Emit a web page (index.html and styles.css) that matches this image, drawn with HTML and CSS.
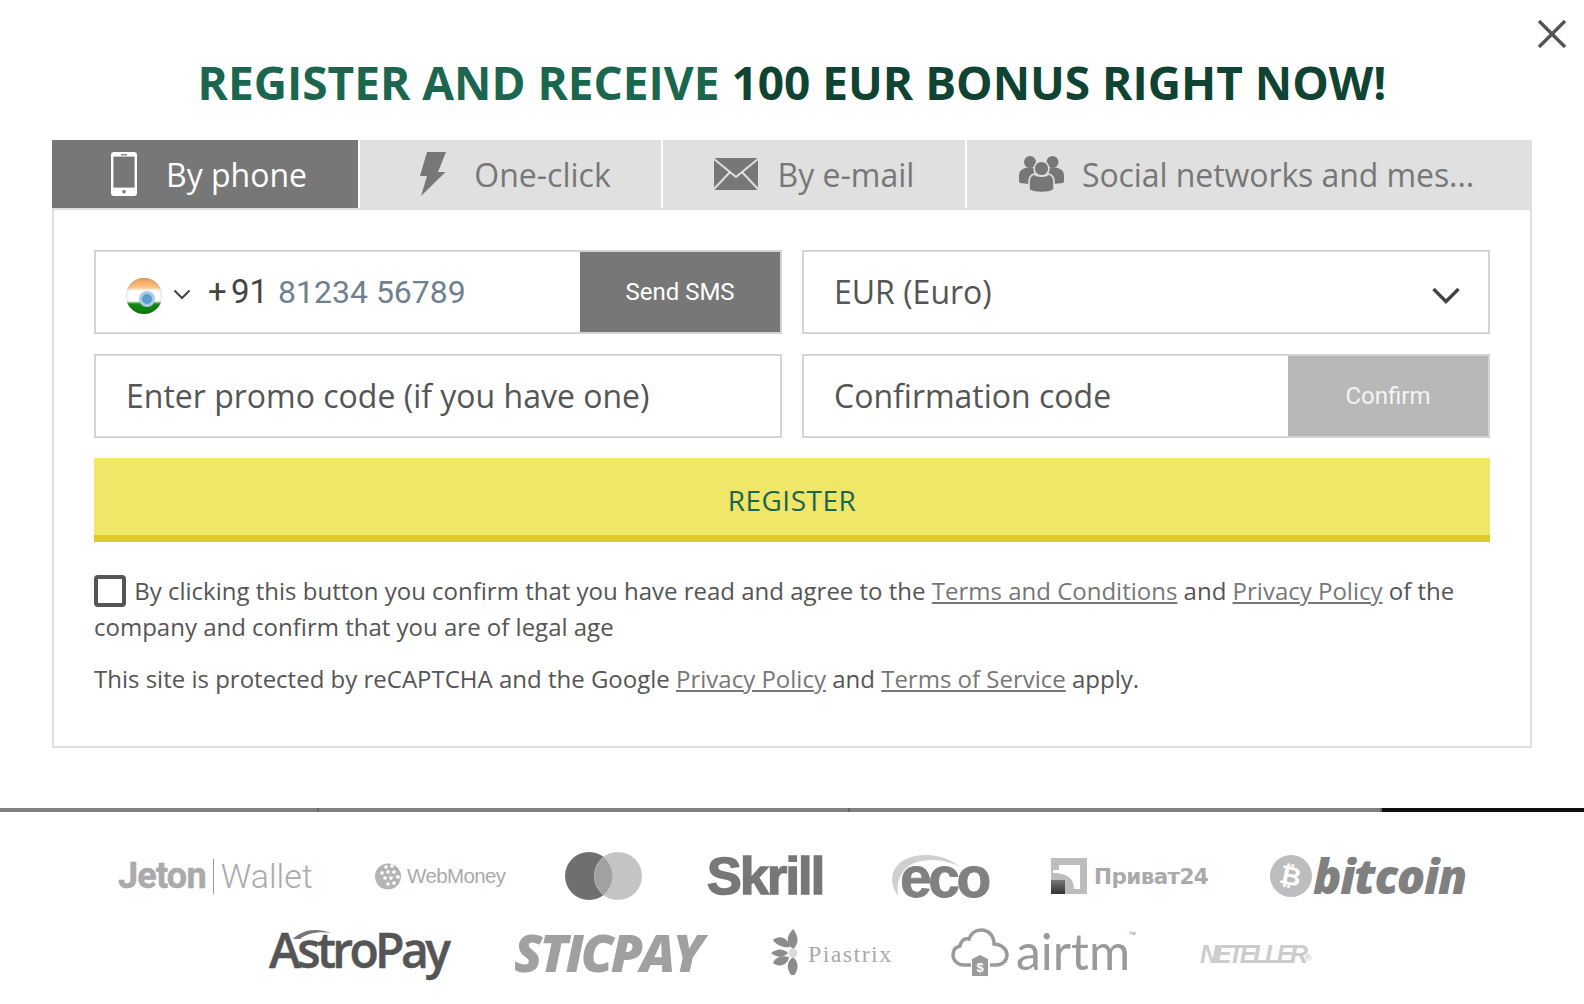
FILE: index.html
```html
<!DOCTYPE html>
<html lang="en">
<head>
<meta charset="utf-8">
<title>Register</title>
<link rel="stylesheet" href="styles.css">
</head>
<body>
<div class="modal">
  <svg class="close" viewBox="0 0 28 28" width="28" height="28"><path d="M1 1 L27 27 M27 1 L1 27" stroke="#555" stroke-width="3.4" fill="none"/></svg>
  <h1 class="title"><span class="t1">REGISTER AND RECEIVE</span> <span class="t2">100 EUR BONUS RIGHT NOW!</span></h1>
  <div class="tabs">
    <div class="tab tab-active t-a">
      <svg class="ico" width="26" height="44" viewBox="0 0 26 44"><rect width="26" height="44" rx="3" fill="#fff"/><rect x="2.4" y="4.6" width="21.2" height="31" fill="#777"/><rect x="10" y="2.2" width="6" height="1.2" fill="#777"/><circle cx="13" cy="39.8" r="1.8" fill="#777"/></svg>
      <span>By phone</span>
    </div>
    <div class="tab t-b">
      <svg class="ico" width="26" height="44" viewBox="0 0 26 44"><path d="M7 0H26L18 20H25.5L1 44L7 24H0Z" fill="#777"/></svg>
      <span>One-click</span>
    </div>
    <div class="tab t-c">
      <svg class="ico" width="44" height="32" viewBox="0 0 44 32"><rect width="44" height="32" rx="2" fill="#777"/><path d="M0 1L22 19L44 1M0 31L16 14M44 31L28 14" fill="none" stroke="#e0e0e0" stroke-width="2"/></svg>
      <span>By e-mail</span>
    </div>
    <div class="tab t-d">
      <svg class="ico" width="45" height="37" viewBox="0 0 45 37"><g fill="#777"><circle cx="11" cy="6" r="6"/><circle cx="33.5" cy="6" r="6"/><path d="M4 13C8 11 16 11 20 14V29L1 27C0 26 0 25 0 23V19C0 16 2 14 4 13Z"/><path d="M41 13C37 11 29 11 25 14V29L44 27C45 26 45 25 45 23V19C45 16 43 14 41 13Z"/></g><g fill="#777" stroke="#e0e0e0" stroke-width="1.6"><circle cx="22.5" cy="12.5" r="7.4"/><path d="M15 18C19 21 26 21 30 18C33 19 35 22 35 26V34C29 37.5 16 37.5 10 34V26C10 22 12 19 15 18Z"/></g></svg>
      <span>Social networks and mes...</span>
    </div>
  </div>
  <div class="panel">
    <div class="grid">
      <div class="field">
        <div class="phone">
          <span class="flag"></span>
          <svg class="mini-caret" width="18" height="11" viewBox="0 0 18 11"><path d="M1.5 1.5 L9 9 L16.5 1.5" fill="none" stroke="#444" stroke-width="2"/></svg>
          <span class="code">+ 91</span>
          <span class="num">81234 56789</span>
        </div>
        <div class="btn btn-dark">Send SMS</div>
      </div>
      <div class="field field-select">
        <span class="val">EUR (Euro)</span>
        <svg class="sel-caret" width="28" height="17" viewBox="0 0 28 17"><path d="M1.5 2 L14 14.5 L26.5 2" fill="none" stroke="#444" stroke-width="3.4"/></svg>
      </div>
      <div class="field"><span class="val">Enter promo code (if you have one)</span></div>
      <div class="field">
        <span class="val grow">Confirmation code</span>
        <div class="btn btn-light">Confirm</div>
      </div>
    </div>
    <div class="register">REGISTER</div>
    <p class="legal legal-first"><span class="check"></span> By clicking this button you confirm that you have read and agree to the <a>Terms and Conditions</a> and <a>Privacy Policy</a> of the company and confirm that you are of legal age</p>
    <p class="legal legal-second">This site is protected by reCAPTCHA and the Google <a>Privacy Policy</a> and <a>Terms of Service</a> apply.</p>
  </div>
</div>
<div class="slider">
  <i class="s1"></i><i class="s2"></i><i class="s3"></i><i class="s4"></i>
</div>
<div class="logos">
  <div class="row row-1">
    <div class="logo l-jeton"><b>Jeton</b><em></em><span>Wallet</span></div>
    <div class="logo l-wm">
      <svg width="26" height="27" viewBox="0 0 26 27"><circle cx="13" cy="13.5" r="13" fill="#b4b4b4"/><g fill="#fff"><path d="M10 2l3 1-1 3-3-1zM16 1l3 1-1 3-3-1zM6 8l3 1-1 3-3-1zM12 7l3 1-1 3-3-1zM18 7l3 1-1 3-3-1zM9 13l3 1-1 3-3-1zM15 13l3 1-1 3-3-1zM21 12l4 1-1 3-3-1zM12 19l3 1-1 3-3-1zM18 18l3 1-1 3-3-1z"/></g></svg>
      <span>WebMoney</span>
    </div>
    <div class="logo l-mc"><svg width="77" height="48" viewBox="0 0 77 48"><circle cx="24" cy="24" r="24" fill="#6f6f6f"/><circle cx="53" cy="24" r="24" fill="#c4c4c4"/><path d="M38.5 5.3a24 24 0 0 1 0 37.4a24 24 0 0 1 0-37.4Z" fill="#a2a2a2"/></svg></div>
    <div class="logo l-skrill">Skrill</div>
    <div class="logo l-eco">
      <svg class="eco-arc" width="76" height="44" viewBox="0 0 76 44"><path d="M8 42 C-6 22 6 1 36 1 C50 1 62 6 70 13 C58 6 36 3 22 10 C10 16 6 30 8 42Z" fill="#cfcfcf"/></svg>
      <span>eco</span>
    </div>
    <div class="logo l-privat">
      <svg width="36" height="36" viewBox="0 0 36 36"><defs><linearGradient id="pg" x1="0" y1="0" x2="0" y2="1"><stop offset="0" stop-color="#777"/><stop offset="1" stop-color="#333"/></linearGradient></defs><rect width="36" height="36" fill="#bdbdbd"/><path d="M8 7H29V31H23C23 22 18 15 2 15V12H8Z" fill="#fff"/><rect y="22" width="14" height="14" fill="url(#pg)"/></svg>
      <span>Приват24</span>
    </div>
    <div class="logo l-btc">
      <span class="btc-c"><span class="btc-s">₿</span></span>
      <span class="btc-t">bitcoin</span>
    </div>
  </div>
  <div class="row row-2">
    <div class="logo l-astro">
      <svg class="astro-arc" width="38" height="12" viewBox="0 0 38 12"><path d="M0 11C8 2 24-1 38 5C26 3 14 5 7 11Z" fill="#777"/></svg>
      <span>AstroPay</span>
    </div>
    <div class="logo l-stic">STICPAY</div>
    <div class="logo l-piastrix">
      <svg width="29" height="46" viewBox="0 0 29 46"><g fill="#8c8c8c"><path d="M22 20C15 15 15 7 22 0C28 7 28 15 22 20Z"/><path d="M22 46C15 41 15 33 22 26C28 33 28 41 22 46Z" transform="matrix(1 0 0 -1 0 74)"/><path d="M19 18C13 19 6 17 2 11C8 5 18 9 19 18Z"/><path d="M17 24C11 19 6 20 0 24C6 29 12 29 17 24Z"/><path d="M18 28C17 36 8 39 2 34C4 28 11 26 18 28Z"/></g><circle cx="22" cy="24" r="4.5" fill="#dcdcdc"/></svg>
      <span>Piastrix</span>
    </div>
    <div class="logo l-airtm">
      <svg width="58" height="48" viewBox="0 0 58 48"><path d="M20 37H13C6 37 2 32 2 27C2 22 5 19 9 18C10 12 14 10 18 11C20 5 25 2 30 2C38 2 43 8 43 16C50 16 56 21 56 27C56 33 51 37 45 37H39" fill="none" stroke="#9a9a9a" stroke-width="3.4"/><path d="M21 31L29 27L37 31V48H21Z" fill="#9a9a9a"/><text x="29" y="44" text-anchor="middle" class="airtm-d">$</text></svg>
      <span class="airtm-t">airtm</span><sup>™</sup>
    </div>
    <div class="logo l-net">NETELLER<small>®</small></div>
  </div>
</div>
</body>
</html>
```
FILE: styles.css
```css
* { box-sizing: border-box; }
html, body { margin: 0; padding: 0; }
body { width: 1584px; height: 1004px; overflow: hidden; background: #fff; font-family: "Open Sans", sans-serif; color: #555; }
.modal { position: relative; padding: 0 52px; height: 808px; }
.close { position: absolute; top: 20px; right: 18px; }
.title { margin: 0; height: 140px; padding-top: 52px; text-align: center; font-size: 46px; line-height: 60px; font-weight: 700; white-space: nowrap; }
.t1 { color: #1b664e; }
.t2 { color: #0f4332; }
.tabs { display: flex; height: 70px; background: #e0e0e0; padding-bottom: 2px; }
.tab { display: flex; align-items: center; justify-content: center; gap: 28px; height: 68px; font-size: 32px; color: #777; border-right: 2px solid #fff; }
.t-a { width: 308px; padding-left: 8px; gap: 29px; }
.t-b { width: 303px; padding-left: 10px; }
.t-c { width: 304px; gap: 20px; }
.t-d { flex: 1; border-right: 0; gap: 18px; padding-right: 6px; letter-spacing: -.08px; }
.tab-active { background: #777; color: #fff; }
.panel { height: 538px; border: 2px solid #e0e0e0; border-top: 0; padding: 40px 40px 0; }
.grid { display: grid; grid-template-columns: 1fr 1fr; gap: 20px 20px; }
.field { display: flex; align-items: center; height: 84px; border: 2px solid #d4d4d4; font-size: 32px; color: #555; padding-left: 30px; }
.field-select { justify-content: space-between; padding-right: 28px; }
.sel-caret { margin-top: 6px; }
.val { white-space: nowrap; margin-bottom: 1px; }
.grow { flex: 1; }
.phone { flex: 1; display: flex; align-items: center; }
.flag { width: 36px; height: 36px; margin-top: 7px; border-radius: 50%; background: linear-gradient(#f0a050 0, #f8c48a 26%, #fff 36%, #fff 64%, #148a14 72%, #0f7a0f 100%); position: relative; box-shadow: inset 0 0 3px rgba(0,0,0,.25); filter: blur(.4px); }
.flag::after { content: ""; position: absolute; left: 13px; top: 13px; width: 10px; height: 10px; border-radius: 50%; background: #5a9ccb; border: 3px solid #a9cde6; }
.mini-caret { margin: 4px 0 0 11px; }
.code { margin-left: 17px; margin-bottom: 1px; color: #444; font-family: Roboto, sans-serif; word-spacing: -4px; font-size: 33px; }
.num { margin-left: 10px; margin-bottom: 1px; color: #708090; font-family: Roboto, sans-serif; }
.btn { align-self: stretch; display: flex; align-items: center; justify-content: center; width: 200px; padding-bottom: 1px; font-family: Roboto, sans-serif; font-size: 24px; color: #fff; }
.btn-dark { background: #777; }
.btn-light { background: #b8b8b8; color: #f4f4f4; }
.register { margin-top: 20px; height: 84px; background: #f0e668; border-bottom: 7px solid #dccb2c; color: #1b664e; font-size: 28px; letter-spacing: .5px; text-align: center; line-height: 84px; }
.legal { margin: 0; font-size: 24px; line-height: 36px; color: #555; }
.legal a { color: #777; text-decoration: underline; }
.legal-first { margin-top: 31px; }
.legal-second { margin-top: 16px; }
.check { display: inline-block; width: 32px; height: 32px; margin-right: 2px; border: 4px solid #555; border-radius: 4px; vertical-align: -7px; }
.slider { display: flex; height: 4px; background: #808080; }
.slider i { display: block; height: 4px; background: #808080; border-right: 2px solid #666; }
.s1 { width: 319px; }
.s2 { width: 531px; }
.s3 { width: 532px; }
.s4 { flex: 1; background: #111 !important; border: 0 !important; }
.logos { display: flex; flex-direction: column; }
.row { display: flex; align-items: center; justify-content: center; }
.row-1 { height: 80px; margin-top: 24px; }
.row-2 { height: 60px; margin-top: 6px; padding-right: 5px; }
.logo { display: flex; align-items: center; flex: none; white-space: nowrap; position: relative; }
.logo svg { flex: none; }
.l-jeton { gap: 7px; width: 194px; color: #aaa; }
.l-jeton b { font-family: Roboto, sans-serif; font-weight: 700; font-size: 36px; letter-spacing: -.8px; -webkit-text-stroke: .5px #aaa; }
.l-jeton em { flex: none; width: 1px; height: 35px; background: #999; }
.l-jeton span { font-family: Roboto, sans-serif; font-weight: 300; font-size: 34px; }
.l-wm { gap: 6px; width: 130px; margin-left: 63px; color: #aaa; }
.l-wm span { font-family: "Liberation Sans", sans-serif; font-size: 20.5px; letter-spacing: -.6px; }
.l-mc { width: 77px; margin-left: 60px; }
.l-skrill { width: 113px; margin-left: 65px; font-family: "Liberation Sans", sans-serif; font-weight: 700; font-size: 52px; letter-spacing: -1.8px; color: #777; -webkit-text-stroke: 1.5px #777; }
.l-eco { width: 99px; height: 44px; margin-left: 70px; }
.eco-arc { position: absolute; left: 0; top: 0; }
.l-eco span { position: relative; margin-left: 10px; margin-top: 2px; font-family: "Liberation Sans", sans-serif; font-weight: 700; font-size: 57px; letter-spacing: -3.5px; color: #808080; line-height: 44px; -webkit-text-stroke: .8px #808080; }
.l-privat { gap: 7px; width: 157px; margin-left: 62px; color: #aaa; }
.l-privat span { font-family: "DejaVu Sans", sans-serif; font-weight: 700; font-size: 21.5px; letter-spacing: -.6px; }
.l-btc { gap: 1px; width: 196px; margin-left: 62px; color: #808080; }
.btc-c { width: 42px; height: 42px; flex: none; border-radius: 50%; background: #bdbdbd; color: #fff; font-family: "DejaVu Sans", sans-serif; font-weight: 700; font-size: 26px; line-height: 42px; text-align: center; }
.btc-s { display: inline-block; transform: rotate(12deg); }
.btc-t { font-family: "Open Sans", sans-serif; font-weight: 800; font-style: italic; font-size: 47px; letter-spacing: -1.3px; line-height: 42px; }
.l-astro { width: 181px; color: #555; }
.astro-arc { position: absolute; left: 24px; top: 2px; }
.l-astro span { margin-bottom: 4px; font-family: "Open Sans", sans-serif; font-weight: 600; font-size: 48px; line-height: 48px; letter-spacing: -3.6px; -webkit-text-stroke: .5px #555; }
.l-stic { width: 193px; margin-left: 64px; font-family: "Open Sans", sans-serif; font-weight: 800; font-style: italic; font-size: 52px; line-height: 60px; letter-spacing: -2.9px; color: #a0a0a0; }
.l-piastrix { gap: 8px; width: 120px; margin-left: 64px; color: #aaa; }
.l-piastrix span { margin-top: 5px; font-family: "Liberation Serif", serif; font-size: 24px; letter-spacing: 1.4px; }
.l-airtm { gap: 7px; width: 174px; margin-left: 60px; color: #9a9a9a; }
.airtm-d { font-family: "Liberation Sans", sans-serif; font-size: 13px; font-weight: 700; fill: #fff; }
.airtm-t { font-family: Lato, sans-serif; font-weight: 400; font-size: 50px; line-height: 48px; margin-bottom: 2px; }
.l-airtm sup { position: absolute; right: -11px; top: 2px; font-size: 9px; line-height: 12px; }
.l-net { width: 110px; margin-left: 75px; padding-top: 4px; font-family: "Liberation Sans", sans-serif; font-weight: 700; font-style: italic; font-size: 25px; letter-spacing: -3.4px; color: #ccc; }
.l-net small { font-size: 9px; font-style: normal; letter-spacing: 0; margin: 8px 0 0 0; }
```
